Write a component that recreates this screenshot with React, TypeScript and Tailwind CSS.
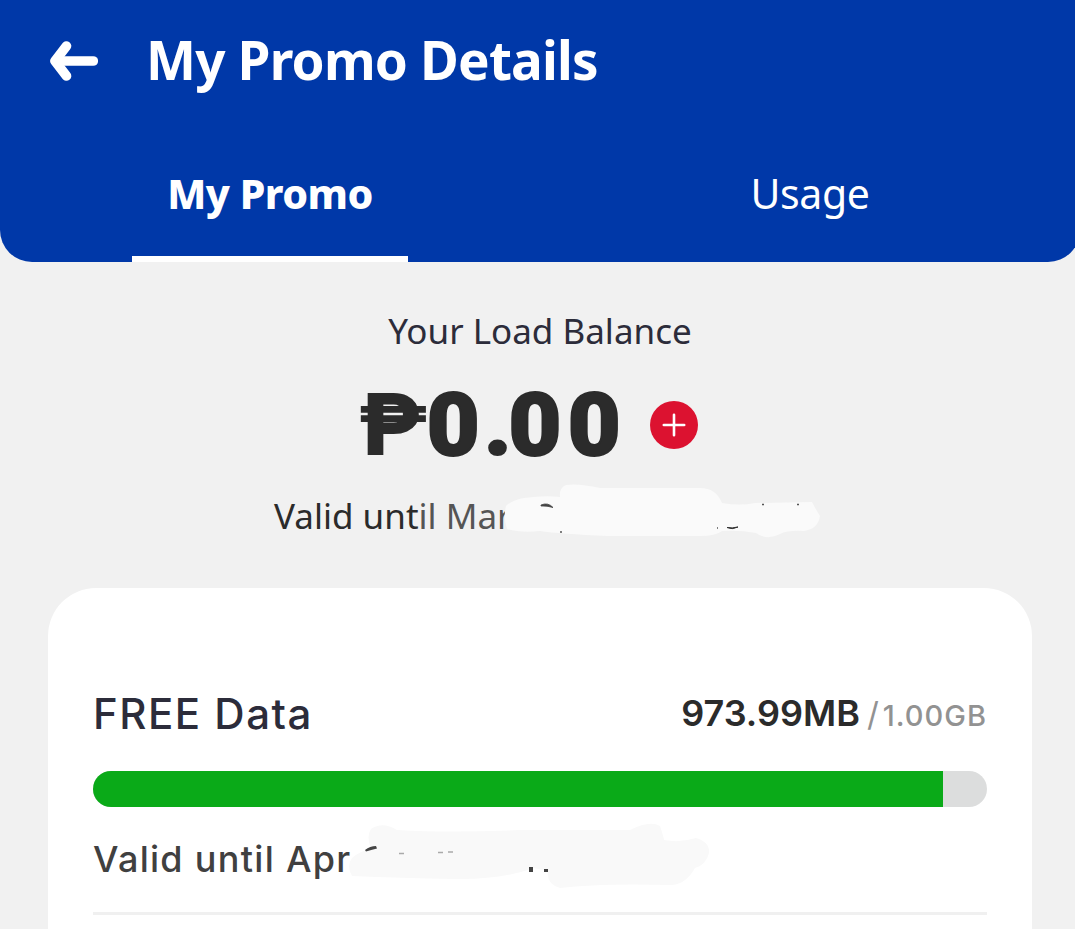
import React from "react";

const tabs = [
  { label: "My Promo", active: true },
  { label: "Usage", active: false },
];

const plan = { name: "FREE Data", left: "973.99MB", total: "1.00GB", percent: 95.1 };

const BackArrow: React.FC = () => (
  <svg width="48" height="40" viewBox="0 0 48 40" fill="none" stroke="#fff">
    <path d="M8 20H43.3" strokeWidth="9.6" strokeLinecap="round" />
    <path d="M16.5 5L5 20L16.5 35" strokeWidth="9.6" strokeLinecap="round" strokeLinejoin="round" />
  </svg>
);

const PlusButton: React.FC = () => (
  <button className="flex h-12 w-12 items-center justify-center rounded-full bg-[#dc1230]">
    <svg width="24" height="24" viewBox="0 0 24 24" stroke="#fff" strokeWidth="2.6" strokeLinecap="round">
      <path d="M12 1.8V22.2M1.8 12H22.2" />
    </svg>
  </button>
);

// Brushed-out part of the balance expiry date
const BalanceSmudge: React.FC = () => (
  <svg className="absolute left-[140px] top-[-16px]" width="416" height="60" viewBox="408 482 416 60">
    <path
      d="M506 506Q512 500 524 498Q545 495 560 497Q559 488 566 485Q578 483 600 488H700Q716 488 722 503Q740 506 755 503L812 502Q815 508 820 516Q818 529 804 531Q788 530 780 534Q767 541 756 533Q740 530 722 531Q716 536 700 536H608Q560 534 540 531Q520 533 507 529Q503 517 506 506Z"
      fill="#fafafa"
    />
    <path d="M541 505Q548 502 553 507.5Q547 505.5 541 506Z" fill="#444" stroke="#444" strokeWidth="0.8" />
    <path d="M727 527.5Q732 528.5 738 527Q732 530 727 527.5Z" fill="#333" stroke="#333" />
    <path d="M560 532h2M762 504.5h2M797 504.5h2M717 528h1" stroke="#555" strokeWidth="1.4" />
  </svg>
);

// Brushed-out part of the promo expiry date
const PromoSmudge: React.FC = () => (
  <svg className="absolute left-[252px] top-[-14px]" width="370" height="72" viewBox="345 820 370 72">
    <path
      d="M352 858Q360 851 371 849Q366 836 371 829Q383 821 397 830Q450 833 520 830L630 830Q650 820 660 826Q664 838 664 840Q680 843 696 838Q710 842 709 853Q706 865 695 868Q686 884 672 885Q600 883 560 888Q546 884 548 871L534 868Q500 880 455 879Q400 878 352 876Q346 866 352 858Z"
      fill="#f9f9f9"
    />
    <path d="M365 850Q370 846 376 846L377 848.5Q371 850 366 851.5Z" fill="#444" />
    <path d="M399 853.5h5M438 852.5h5M448 852h5" stroke="#aaa" strokeWidth="1.4" />
    <path d="M529 867h4v5h-4zM544 869h4v3h-4z" fill="#444" />
  </svg>
);

const App: React.FC = () => {
  return (
    <main className="h-[929px] w-full overflow-hidden bg-[#f1f1f1] font-['Noto_Sans',sans-serif]">
      <div className="w-[1080px]">
        <header className="h-[262px] rounded-b-[32px] bg-[#0038a8] text-white">
          <div className="flex h-[122px] items-center gap-[48px] pl-[50px]">
            <BackArrow />
            <h1 className="whitespace-nowrap pb-1 text-[53px] font-bold leading-none tracking-[-0.8px]">My Promo Details</h1>
          </div>
          <nav className="grid h-[140px] grid-cols-2">
            {tabs.map((tab) => (
              <div key={tab.label} className="flex flex-col items-center justify-between">
                <span
                  className={
                    tab.active
                      ? "pt-[50px] text-[41px] font-extrabold leading-[42px] tracking-[-0.5px]"
                      : "pt-[50px] text-[41px] leading-[42px] tracking-[-0.4px]"
                  }
                >
                  {tab.label}
                </span>
                {tab.active && <span className="h-[6px] w-[276px] bg-white" />}
              </div>
            ))}
          </nav>
        </header>

        <section className="flex h-[326px] flex-col items-center pt-[49px] text-[#2b2b2b]">
          <p className="text-[35px] leading-10 text-[#2c2c3a]">Your Load Balance</p>
          <div className="mr-[23px] mt-[31px] flex h-[86px] w-[339px] items-center justify-between">
            <span className="origin-left scale-x-105 whitespace-nowrap font-['Roboto',sans-serif] text-[87px] font-black leading-none">
              <span className="tracking-[-1px]">₱</span>
              <span className="tracking-[4px] [-webkit-text-stroke:2px_#2b2b2b]">0</span>
              <span className="tracking-[-3px] [-webkit-text-stroke:2px_#2b2b2b]">.</span>
              <span className="tracking-[6px] [-webkit-text-stroke:2px_#2b2b2b]">00</span>
            </span>
            <PlusButton />
          </div>
          <div className="relative mt-[30px] h-10 w-[544px]">
            <p className="whitespace-nowrap pl-[6px] text-[35px] leading-9">
              Valid unt<span className="text-[#555]">il Mar</span>
            </p>
            <BalanceSmudge />
          </div>
        </section>

        <section className="mx-12 h-[360px] rounded-t-[48px] bg-white px-[45px] pt-[101px] font-['Inter',sans-serif]">
          <div className="flex h-[50px] items-center justify-between">
            <h2 className="text-[42px] font-medium leading-none tracking-[1.5px] text-[#2c2c3a]">{plan.name}</h2>
            <p className="flex items-baseline pb-[3px] text-[36px] font-semibold leading-none text-[#2b2b2b]">
              {plan.left}
              <span className="ml-[7px] mr-[4px] text-[33px] font-normal text-[#929292]">/</span>
              <span className="text-[29px] font-medium tracking-[1px] text-[#929292]">{plan.total}</span>
            </p>
          </div>
          <div className="mt-8 h-9 overflow-hidden rounded-full bg-[#dcdddd]">
            <div className="h-full bg-[#0aaa18]" style={{ width: `${plan.percent}%` }} />
          </div>
          <div className="relative mt-[27px] h-[50px]">
            <p className="text-[36px] font-medium leading-[50px] tracking-[1.3px] text-[#404040]">Valid until Apr</p>
            <PromoSmudge />
          </div>
          <hr className="mt-[28px] border-t-[3px] border-[#f0f0f0]" />
        </section>
      </div>
    </main>
  );
};

export default App;
